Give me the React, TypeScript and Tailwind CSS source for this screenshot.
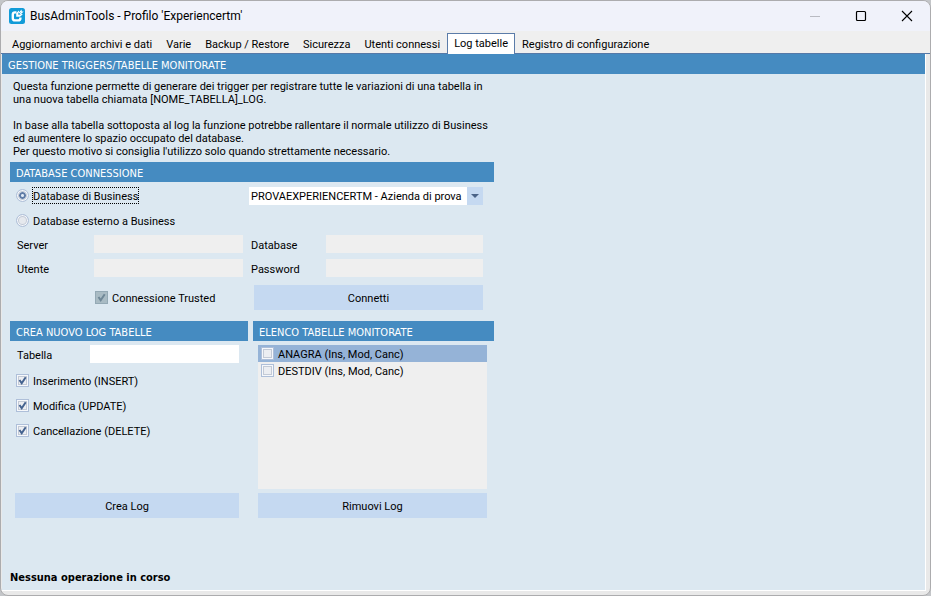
import React, { useState } from 'react';
import clsx from 'clsx';

const tabs = [
  'Aggiornamento archivi e dati',
  'Varie',
  'Backup / Restore',
  'Sicurezza',
  'Utenti connessi',
  'Log tabelle',
  'Registro di configurazione',
];

const companies = ['PROVAEXPERIENCERTM - Azienda di prova'];

const monitoredTables = ['ANAGRA (Ins, Mod, Canc)', 'DESTDIV (Ins, Mod, Canc)'];

const AppLogo = () => (
  <svg width="16" height="16" viewBox="0 0 16 16" aria-hidden="true">
    <rect width="16" height="16" rx="2.500" fill="#129bd8" />
    <path
      d="M7.500 4.400H6Q3.800 4.400 3.800 6.600v3.600q0 2.200 2.200 2.200h3.200q2.200 0 2.200-2.200V9.400"
      fill="none"
      stroke="#fff"
      strokeWidth="2.400"
    />
    <path d="M7.200 8.800V5.200L9.800 2.400l.4 1.800 2.300-2.700.3 1.900 1.900.1-2.600 2.500 1.800.3-2.900 2.500z" fill="#fff" />
    <path d="M9.800 6.200l1.800-1.800M9.600 4.600v1.800h1.900" fill="none" stroke="#129bd8" strokeWidth=".7" />
  </svg>
);

const TitleBar = () => (
  <header className="flex h-[30px] shrink-0 items-center bg-[#f0f2fa] pl-2">
    <AppLogo />
    <h1 className="ml-[5px] flex-1 text-xs text-black">
      BusAdminTools - Profilo 'Experiencertm'
    </h1>
    <button type="button" aria-label="Riduci" disabled className="flex h-full w-[46px] items-center justify-center text-[#b9bbc2]">
      <svg width="12" height="12" viewBox="0 0 12 12" stroke="currentColor">
        <path d="M1 6.500h10" />
      </svg>
    </button>
    <button type="button" aria-label="Ingrandisci" className="flex h-full w-[46px] items-center justify-center text-black">
      <svg width="12" height="12" viewBox="0 0 12 12" fill="none" stroke="currentColor">
        <rect x="1.500" y="1.500" width="9" height="9" rx="1" strokeWidth="1.200" />
      </svg>
    </button>
    <button type="button" aria-label="Chiudi" className="flex h-full w-[46px] items-center justify-center text-black">
      <svg width="12" height="12" viewBox="0 0 12 12" stroke="currentColor">
        <path d="M1 1l10 10M11 1L1 11" strokeWidth="1.100" />
      </svg>
    </button>
  </header>
);

const SectionTitle = ({ children }: { children: React.ReactNode }) => (
  <h2 className="h-5 bg-[#458bc1] px-1.5 font-['DejaVu_Sans_Condensed',Tahoma,sans-serif] leading-6 text-white">
    {children}
  </h2>
);

interface CheckProps {
  id: string;
  label: string;
  defaultChecked?: boolean;
  disabled?: boolean;
  className?: string;
}

const Check: React.FC<CheckProps> = ({ id, label, defaultChecked = false, disabled = false, className = '' }) => (
  <div className={clsx('flex items-center gap-1', className)}>
    <span className="relative flex">
      <input
        id={id}
        type="checkbox"
        defaultChecked={defaultChecked}
        disabled={disabled}
        className="peer size-[13px] appearance-none border border-[#aebfd9] bg-[#eceef2] shadow-[inset_0_0_0_1px_#f6f8fb,inset_0_0_0_2px_#c3cad6] disabled:border-[#94a9b5] disabled:bg-[#a9bbc4] disabled:shadow-none"
      />
      <svg
        viewBox="0 0 13 13"
        className="pointer-events-none absolute inset-0 hidden size-[13px] text-[#44628f] peer-checked:block peer-disabled:text-[#6f8797]"
      >
        <path d="M3.500 6l2.200 3.300L9.700 3.300" fill="none" stroke="currentColor" strokeWidth="2" />
      </svg>
    </span>
    <label htmlFor={id} className="pt-0.5">{label}</label>
  </div>
);

const Radio = ({ id, label, checked, onChange }: { id: string; label: string; checked: boolean; onChange: () => void }) => (
  <div className="flex h-[25px] items-center gap-[3px]">
    <input
      id={id}
      type="radio"
      name="source"
      checked={checked}
      onChange={onChange}
      className="size-[13px] appearance-none rounded-full border border-[#aebfd9] bg-[#e6e9ee] shadow-[inset_0_0_0_1px_#f6f8fb,inset_0_0_0_2px_#c3cad6] checked:bg-[radial-gradient(circle,#dfe8f4_0_1px,#5f7ba6_2px_3px,#eef2f8_4px)]"
    />
    <label
      htmlFor={id}
      className={clsx('border border-dotted pt-0.5', checked ? 'border-black' : 'border-transparent')}
    >
      {label}
    </label>
  </div>
);

const Field = ({ id, label, type = 'text' }: { id: string; label: string; type?: string }) => (
  <>
    <label htmlFor={id} className="pt-1">{label}</label>
    <input id={id} type={type} disabled className="h-[18px] w-full min-w-0 bg-[#efefef] px-1" />
  </>
);

const ActionButton = ({ children }: { children: React.ReactNode }) => (
  <button type="button" className="h-[25px] w-full bg-[#c5d9f1] pt-px text-black hover:bg-[#b5cdec]">
    {children}
  </button>
);

const App: React.FC = () => {
  const [activeTab, setActiveTab] = useState('Log tabelle');
  const [source, setSource] = useState('business');
  const [selected, setSelected] = useState(monitoredTables[0]);

  return (
    <div className="h-screen bg-[#c4c6c9] font-[Roboto,Tahoma,sans-serif] text-[11px] leading-[13px] text-black">
      <div className="flex h-full flex-col overflow-hidden rounded-lg border border-[#acacae] bg-[#e9e9e9]">
        <TitleBar />

        <nav role="tablist" className="flex h-[23px] shrink-0 items-end border-b border-[#5579a8] bg-[#efefef] pl-1">
          {tabs.map((tab) => (
            <button
              key={tab}
              type="button"
              role="tab"
              aria-selected={tab === activeTab}
              onClick={() => setActiveTab(tab)}
              className={clsx(
                'border-x border-t px-1.5 whitespace-nowrap',
                tab === activeTab ? '-mb-px h-[21px] border-[#5b7ca9] bg-white pb-0.5' : 'h-[18px] border-transparent'
              )}
            >
              {tab}
            </button>
          ))}
        </nav>

        <main className="mr-1 mb-1 ml-px flex flex-1 flex-col border-r border-b border-white bg-[#dce8f1]">
          <SectionTitle>GESTIONE TRIGGERS/TABELLE MONITORATE</SectionTitle>

          <div className="flex w-full max-w-[492px] flex-col pl-2">
            <div className="flex flex-col gap-[13px] pt-1.5 pb-1 pl-[3px] whitespace-nowrap">
              <p>
                Questa funzione permette di generare dei trigger per registrare tutte le variazioni di una tabella in
                <br />
                una nuova tabella chiamata [NOME_TABELLA]_LOG.
              </p>
              <p>
                In base alla tabella sottoposta al log la funzione potrebbe rallentare il normale utilizzo di Business
                <br />
                ed aumentere lo spazio occupato del database.
                <br />
                Per questo motivo si consiglia l'utilizzo solo quando strettamente necessario.
              </p>
            </div>

            <section>
              <SectionTitle>DATABASE CONNESSIONE</SectionTitle>
              <div className="flex justify-between pt-px pr-[11px] pl-1.5">
                <div>
                  <Radio
                    id="business"
                    label="Database di Business"
                    checked={source === 'business'}
                    onChange={() => setSource('business')}
                  />
                  <Radio
                    id="external"
                    label="Database esterno a Business"
                    checked={source === 'external'}
                    onChange={() => setSource('external')}
                  />
                </div>
                <div className="relative mt-1 h-[18px] w-[234px]">
                  <select aria-label="Azienda" className="size-full appearance-none bg-white pr-4 pl-0.5">
                    {companies.map((c) => (
                      <option key={c}>{c}</option>
                    ))}
                  </select>
                  <span className="pointer-events-none absolute inset-y-0 right-0 flex w-4 items-center justify-center bg-[#c5d9f1]">
                    <svg width="8" height="4" viewBox="0 0 8 4" fill="#4a6387">
                      <path d="M0 0h8L4 4z" />
                    </svg>
                  </span>
                </div>
              </div>

              <div className="grid grid-cols-[77px_149px_8px_75px_157px] gap-y-1.5 pt-[2px] pl-[7px]">
                <Field id="server" label="Server" />
                <span />
                <Field id="database" label="Database" />
                <Field id="user" label="Utente" />
                <span />
                <Field id="password" label="Password" type="password" />
              </div>

              <div className="flex items-center justify-between pt-2 pr-[11px] pl-[85px]">
                <Check id="trusted" label="Connessione Trusted" defaultChecked disabled />
                <div className="w-[229px]">
                  <ActionButton>Connetti</ActionButton>
                </div>
              </div>
            </section>

            <div className="grid grid-cols-[238px_1fr] gap-[5px] pt-[11px]">
              <section className="flex flex-col">
                <SectionTitle>CREA NUOVO LOG TABELLE</SectionTitle>
                <div className="flex pt-1 pr-[9px] pl-[7px]">
                  <label htmlFor="table" className="w-[73px] pt-1">Tabella</label>
                  <input id="table" type="text" className="h-[18px] min-w-0 flex-1 bg-white px-1" />
                </div>
                <div className="flex flex-col pt-[5px] pl-1.5">
                  <Check id="insert" label="Inserimento (INSERT)" defaultChecked className="h-[25px]" />
                  <Check id="update" label="Modifica (UPDATE)" defaultChecked className="h-[25px]" />
                  <Check id="delete" label="Cancellazione (DELETE)" defaultChecked className="h-[25px]" />
                </div>
                <div className="mt-auto pr-[9px] pl-[5px]">
                  <ActionButton>Crea Log</ActionButton>
                </div>
              </section>

              <section>
                <SectionTitle>ELENCO TABELLE MONITORATE</SectionTitle>
                <div className="flex flex-col gap-1 pt-1 pr-[7px] pl-[5px]">
                  <ul className="h-36 bg-[#efefef]">
                    {monitoredTables.map((table) => (
                      <li
                        key={table}
                        onClick={() => setSelected(table)}
                        className={clsx('pl-[3px]', table === selected && 'bg-[#95b3d7]')}
                      >
                        <Check id={table} label={table} className="h-[17px]" />
                      </li>
                    ))}
                  </ul>
                  <ActionButton>Rimuovi Log</ActionButton>
                </div>
              </section>
            </div>
          </div>

          <footer className="mt-auto pb-1.5 pl-2 font-['DejaVu_Sans_Condensed',Tahoma,sans-serif] font-bold">
            Nessuna operazione in corso
          </footer>
        </main>
      </div>
    </div>
  );
};

export default App;
